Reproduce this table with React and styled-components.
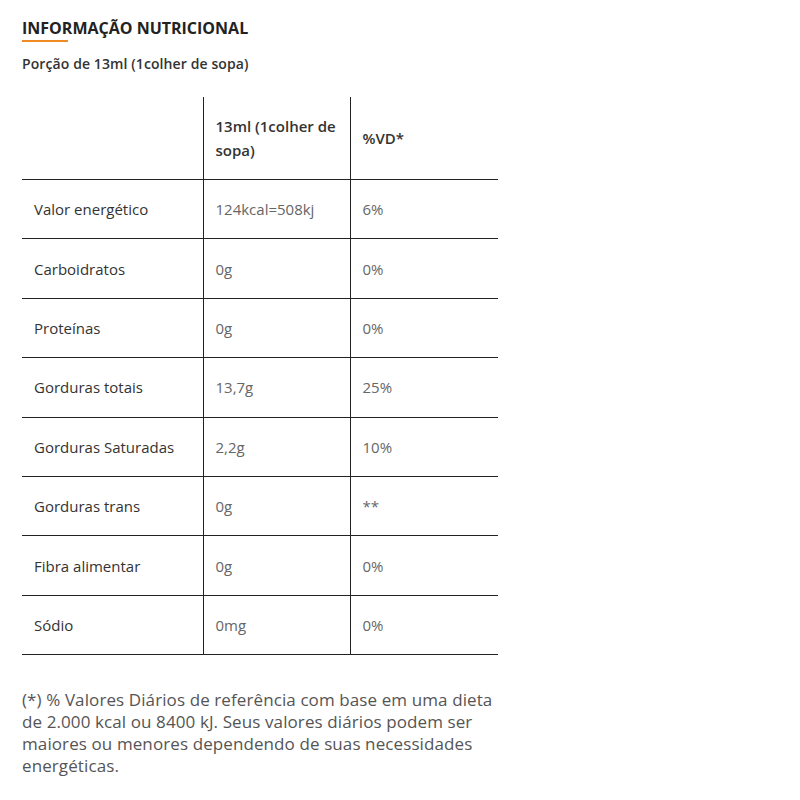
import React from "react";
import styled, { createGlobalStyle } from "styled-components";

const Global = createGlobalStyle`
  html, body { margin: 0; padding: 0; background: #fff; }
  body { font-family: "Open Sans", "Liberation Sans", sans-serif; }
`;

const Page = styled.div`
  padding: 18px 22px 0 22px;
  width: 476px;
`;

const Title = styled.h2`
  position: relative;
  margin: 0;
  font-size: 16px;
  font-weight: 700;
  line-height: 20px;
  color: #222;
  letter-spacing: 0;
  padding-bottom: 4px;
  &::after {
    content: "";
    position: absolute;
    left: 0;
    bottom: 0;
    width: 46px;
    height: 2px;
    background: #f08a24;
  }
`;

const Portion = styled.p`
  margin: 12px 0 0 0;
  font-size: 14px;
  line-height: 20px;
  font-weight: 600;
  color: #333;
  letter-spacing: 0.1px;
`;

const Table = styled.table`
  margin-top: 23px;
  width: 476px;
  border-collapse: collapse;
  table-layout: fixed;
`;

const Col = styled.col`
  width: ${(p) => p.$w}px;
`;

const Cell = styled.td`
  border-bottom: 1.5px solid #222;
  border-left: ${(p) => (p.$first ? "none" : "1.5px solid #222")};
  padding: ${(p) => (p.$head ? "17px 12px" : "0 12px")};
  height: ${(p) => (p.$head ? "auto" : "58.4px")};
  font-size: 15px;
  line-height: 24px;
  vertical-align: middle;
  color: ${(p) => (p.$first || p.$head ? "#333" : "#666")};
  font-weight: ${(p) => (p.$head ? 600 : 400)};
  letter-spacing: 0;
  text-align: left;
`;

const Note = styled.p`
  margin: 34px 0 0 0;
  font-size: 17px;
  line-height: 22px;
  color: #555;
  letter-spacing: 0.1px;
`;

const rows = [
  ["Valor energético", "124kcal=508kj", "6%"],
  ["Carboidratos", "0g", "0%"],
  ["Proteínas", "0g", "0%"],
  ["Gorduras totais", "13,7g", "25%"],
  ["Gorduras Saturadas", "2,2g", "10%"],
  ["Gorduras trans", "0g", "**"],
  ["Fibra alimentar", "0g", "0%"],
  ["Sódio", "0mg", "0%"],
];

export default function App() {
  return (
    <>
      <Global />
      <Page>
        <Title>INFORMAÇÃO NUTRICIONAL</Title>
        <Portion>Porção de 13ml (1colher de sopa)</Portion>
        <Table>
          <colgroup>
            <Col $w={181} />
            <Col $w={147} />
            <Col $w={148} />
          </colgroup>
          <tbody>
            <tr>
              <Cell $head $first></Cell>
              <Cell $head>13ml (1colher de sopa)</Cell>
              <Cell $head>%VD*</Cell>
            </tr>
            {rows.map((r) => (
              <tr key={r[0]}>
                <Cell $first>{r[0]}</Cell>
                <Cell>{r[1]}</Cell>
                <Cell>{r[2]}</Cell>
              </tr>
            ))}
          </tbody>
        </Table>
        <Note>
          (*) % Valores Diários de referência com base em uma dieta de 2.000 kcal ou 8400 kJ. Seus valores diários podem ser maiores ou menores dependendo de suas necessidades energéticas.
        </Note>
      </Page>
    </>
  );
}
